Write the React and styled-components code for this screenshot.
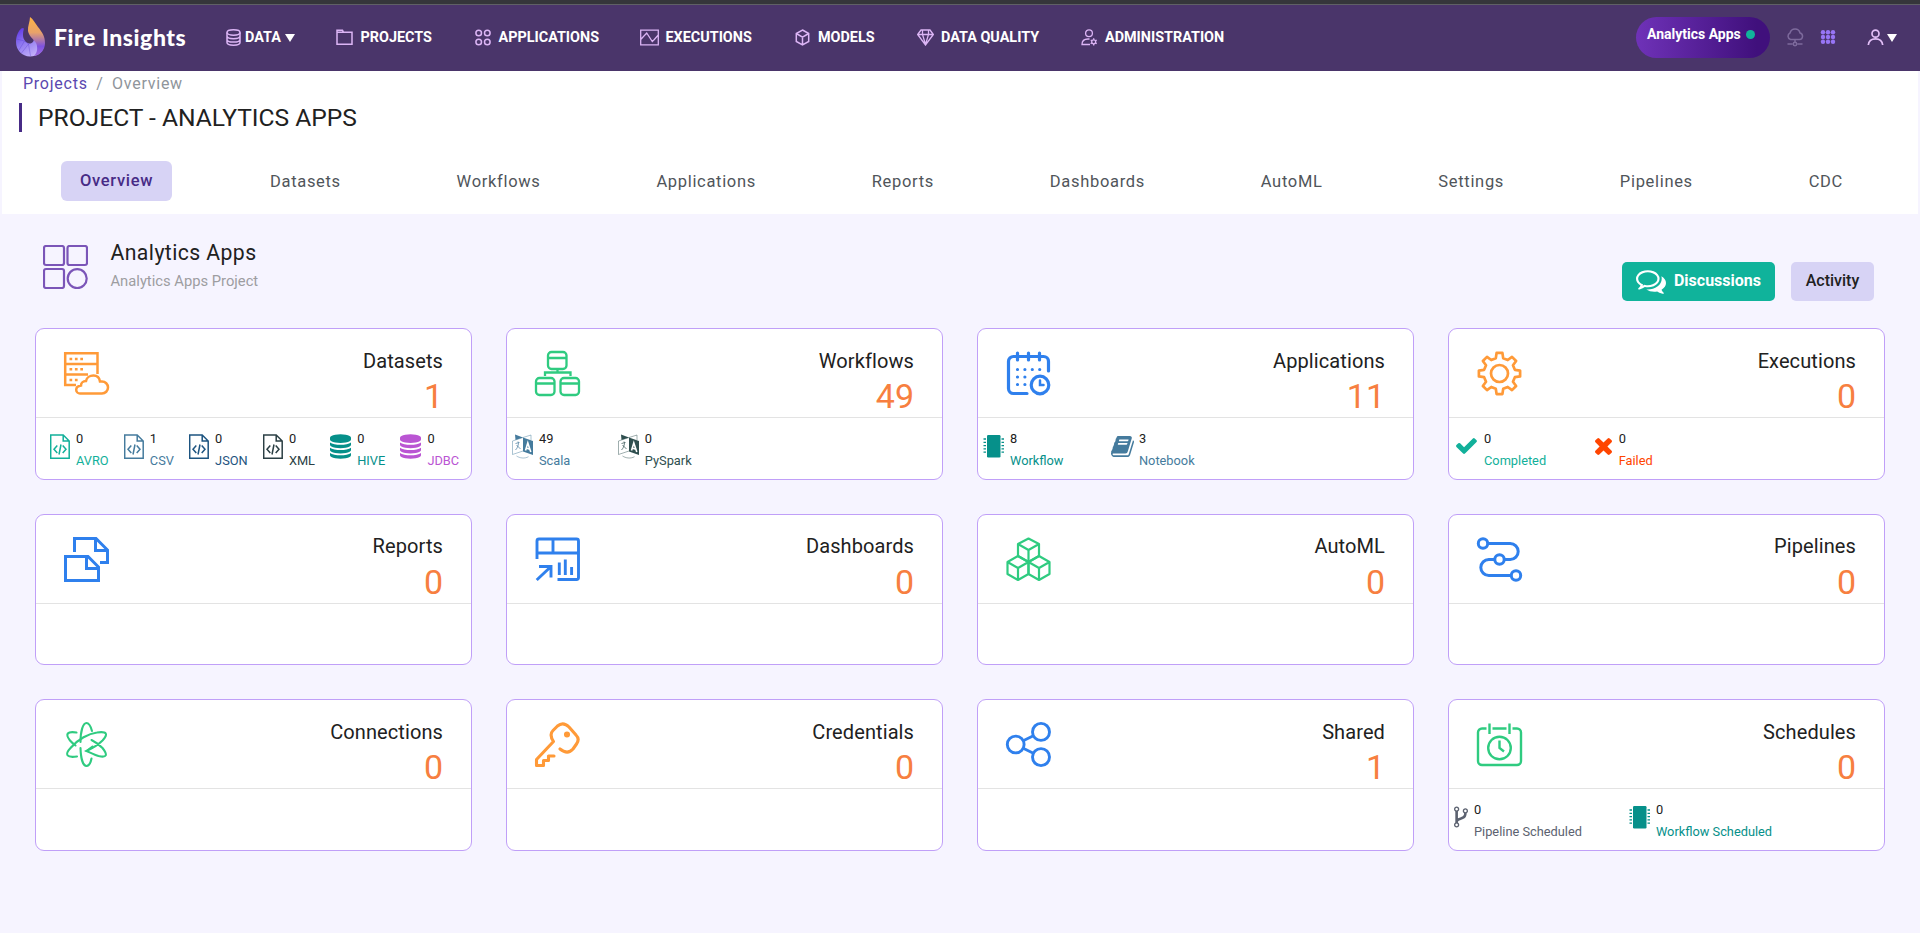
import React from "react";
import styled, { createGlobalStyle } from "styled-components";

const GlobalStyle = createGlobalStyle`
  * { box-sizing: border-box; }
  body {
    margin: 0;
    background: #f6f4ff;
    font-family: Roboto, "Liberation Sans", sans-serif;
    color: #212121;
  }
`;

const Page = styled.div`
  height: 933px;
  display: flex;
  flex-direction: column;
  overflow: hidden;
`;

const TopEdge = styled.div`
  height: 5px;
  background: #35363a;
  border-bottom: 1px solid #5f6065;
`;

const NavBar = styled.nav`
  height: 66px;
  padding: 0 23px 0 15px;
  background: #4a356a;
  display: flex;
  align-items: center;
  color: #fff;
`;

const Brand = styled.div`
  display: flex;
  align-items: center;
  width: 211px;
  gap: 8px;
  padding-bottom: 3px;
`;

const BrandName = styled.span`
  font-family: Lato, sans-serif;
  font-weight: 900;
  font-size: 23px;
  letter-spacing: 0.55px;
  line-height: 30px;
  white-space: nowrap;
`;

const Menu = styled.div`
  display: flex;
  align-items: center;
  flex: 1;
  height: 32px;
  padding-bottom: 2px;
`;

const MenuItem = styled.a`
  display: flex;
  align-items: center;
  width: ${(p) => p.$w}px;
  gap: ${(p) => p.$gap}px;
  font-size: 14.4px;
  font-weight: 700;
  line-height: 20px;
  white-space: nowrap;
  svg { flex: none; color: #dcb5f5; }
  span { padding-top: 2px; }
`;

const Caret = styled.i`
  width: 0;
  height: 0;
  border-left: 5px solid transparent;
  border-right: 5px solid transparent;
  border-top: 8px solid #fff;
  margin-left: ${(p) => p.$ml || 0}px;
  margin-top: 2px;
`;

const NavRight = styled.div`
  display: flex;
  align-items: center;
  padding-bottom: 2px;
`;

const ProjectPill = styled.div`
  width: 134px;
  height: 41px;
  border-radius: 21px;
  padding: 0 0 6px 11px;
  display: flex;
  align-items: center;
  gap: 5px;
  background: linear-gradient(90deg, #6f32b8 0%, #40107c 90%);
  font-size: 14px;
  font-weight: 700;
  white-space: nowrap;
`;

const Dot = styled.i`
  width: 9px;
  height: 9px;
  border-radius: 50%;
  background: #11b39b;
`;

const NavIcons = styled.div`
  display: flex;
  align-items: center;
  padding-left: 16px;
`;

const PageHead = styled.header`
  height: 143px;
  margin: 0 2px;
  background: #fff;
  padding-top: 1px;
`;

const Crumbs = styled.div`
  padding-left: 21px;
  height: 24px;
  line-height: 24px;
  font-size: 16px;
  letter-spacing: 0.75px;
  color: #8f959b;
  display: flex;
  gap: 8.5px;
  a { color: #5a48b0; }
`;

const Title = styled.h1`
  margin: 7px 0 0 17px;
  height: 29px;
  padding-left: 16px;
  border-left: 3px solid #472b86;
  font-size: 24.6px;
  font-weight: 400;
  line-height: 29px;
`;

const Tabs = styled.div`
  margin-top: 29px;
  padding: 0 57px 0 59px;
  display: flex;
  justify-content: space-between;
`;

const Tab = styled.a`
  height: 40px;
  padding: 0 ${(p) => (p.$active ? 19 : 18)}px;
  border-radius: 6px;
  font-size: 16.5px;
  letter-spacing: 0.68px;
  line-height: ${(p) => (p.$active ? 39 : 41)}px;
  font-weight: ${(p) => (p.$active ? 500 : 400)};
  color: ${(p) => (p.$active ? "#472b86" : "#50555a")};
  background: ${(p) => (p.$active ? "#d7d3f5" : "transparent")};
`;

const ProjectRow = styled.section`
  height: 114px;
  padding: 23px 46px 0 43px;
  display: flex;
  align-items: flex-start;
`;

const ProjectIcon = styled.div`
  padding-top: 8px;
  width: 67.5px;
`;

const ProjectText = styled.div`
  flex: 1;
  padding-top: 1px;
`;

const ProjectName = styled.div`
  font-size: 21.2px;
  letter-spacing: 0.42px;
  line-height: 30px;
`;

const ProjectDesc = styled.div`
  margin-top: 3px;
  font-size: 14.75px;
  line-height: 20px;
  color: #9d9da1;
`;

const Button = styled.button`
  margin-top: 25px;
  height: 39px;
  width: ${(p) => p.$w}px;
  margin-left: ${(p) => p.$ml || 0}px;
  border: 0;
  border-radius: 5px;
  padding: 0 0 2px;
  display: flex;
  align-items: center;
  justify-content: center;
  gap: 8px;
  font-family: inherit;
  font-size: 16px;
  font-weight: ${(p) => (p.$primary ? 700 : 500)};
  background: ${(p) => (p.$primary ? "#10b39b" : "#d7d3f5")};
  color: ${(p) => (p.$primary ? "#fff" : "#212121")};
  svg { margin-top: 3px; }
`;

const Grid = styled.main`
  padding: 0 35px;
  display: grid;
  grid-template-columns: repeat(4, 437px);
  grid-auto-rows: 151.5px;
  gap: 34px;
`;

const Card = styled.article`
  background: #fff;
  border: 1px solid #c09ff8;
  border-radius: 9px;
  display: flex;
  flex-direction: column;
`;

const CardTop = styled.div`
  height: 89px;
  border-bottom: 1px solid #e3e3e3;
  padding: 0 28px;
  display: flex;
  justify-content: space-between;
`;

const CardIcon = styled.svg`
  width: 45px;
  height: 45px;
  margin-top: 22px;
  fill: none;
  overflow: visible;
  stroke: currentColor;
  color: ${(p) => p.$color};
`;

const CardText = styled.div`
  text-align: right;
  padding-top: 17.9px;
`;

const CardTitle = styled.div`
  font-size: 20px;
  letter-spacing: 0.1px;
  line-height: 28px;
`;

const CardCount = styled.div`
  font-size: 34px;
  line-height: 40px;
  margin-top: 1.2px;
  color: #f77f40;
`;

const CardBottom = styled.div`
  flex: 1;
  display: flex;
  align-items: flex-start;
  padding: 12px 0 0 ${(p) => p.$pl}px;
  gap: ${(p) => p.$gap}px;
`;

const Stat = styled.div`
  display: flex;
  gap: ${(p) => p.$gap}px;
  color: ${(p) => p.$color};
  svg { flex: none; margin-top: ${(p) => p.$top}px; }
`;

const StatText = styled.div`
  font-size: 12.8px;
  line-height: 18px;
  white-space: nowrap;
`;

const StatValue = styled.div`
  color: #212121;
`;

const StatLabel = styled.div`
  margin-top: 4px;
`;

function Svg({ w, h, vb, sw = 1.5, fill = "none", stroke = "currentColor", children, color }) {
  return (
    <svg width={w} height={h} viewBox={vb || `0 0 ${w} ${h}`} fill={fill} stroke={stroke} strokeWidth={sw} color={color}>
      {children}
    </svg>
  );
}

const Solid = ({ w, h, vb = "0 0 1792 1792", d }) => (
  <svg width={w} height={h} viewBox={vb} fill="currentColor"><path d={d} /></svg>
);

const Flame = () => (
  <svg width="31" height="40" viewBox="0 0 31 40">
    <defs>
      <linearGradient id="fo" x1="0" y1="0" x2="0" y2="1">
        <stop offset="0" stopColor="#ffb444" />
        <stop offset=".4" stopColor="#e8a26a" />
        <stop offset=".75" stopColor="#7d52e0" />
        <stop offset="1" stopColor="#a06be0" />
      </linearGradient>
      <linearGradient id="fp" x1="0" y1="0" x2="0.6" y2="1">
        <stop offset="0" stopColor="#5a2fe6" />
        <stop offset=".5" stopColor="#8f78f0" />
        <stop offset="1" stopColor="#c3b0fa" />
      </linearGradient>
    </defs>
    <path d="M7 11C3 14 1 19 1 25c0 8 6 14.500 14 14.500 7 0 13-4 14-11l-10-7c0 3-2 5-4.500 5C10.500 26 8 22 8 18c0-3 .5-5 1-6.500z" fill="url(#fp)" />
    <path d="M1.500 22l8 2 4 3-7 9M9.500 24L4 33M13.500 27l2 12" stroke="#5b3fd0" strokeOpacity=".45" strokeWidth=".8" fill="none" />
    <path d="M15 0c3 2 5 6 8 10 4 5 7 9 7 16 0 6-4 12-11 13 3-3 4-7 2.500-12-1.500-4-7.500-7-8.500-13C12.500 9 15 5 15 0z" fill="url(#fo)" />
  </svg>
);

const NavIcon = {
  data: (
    <Svg w={15} h={17}>
      <ellipse cx="7.500" cy="3.500" rx="6.500" ry="2.700" />
      <path d="M1 3.500v10c0 1.500 3 2.700 6.500 2.700s6.500-1.200 6.500-2.700v-10M1 7c0 1.500 3 2.700 6.500 2.700S14 8.500 14 7M1 10.400c0 1.500 3 2.700 6.500 2.700s6.500-1.200 6.500-2.700" />
    </Svg>
  ),
  projects: <Svg w={17} h={17}><path d="M1 15.200V1.300h5.500l1 2H16v11.900zM1 3.300h7" /></Svg>,
  apps: (
    <Svg w={16} h={17}>
      <circle cx="3.700" cy="4" r="2.800" /><circle cx="12.300" cy="4" r="2.800" />
      <circle cx="3.700" cy="13" r="2.800" /><circle cx="12.300" cy="13" r="2.800" />
    </Svg>
  ),
  exec: <Svg w={19} h={17} sw={1.300}><path d="M.7 1.200h17.600v14.600H.7zM.7 10.500l6-6.500 5.600 8.500 2-2 4-4.500" /></Svg>,
  models: <Svg w={15} h={17}><path d="M7.500 1l6.200 3.500v8L7.500 16l-6.200-3.500v-8zM1.300 4.500l6.200 3.700 6.200-3.700M7.500 8.200V16" /></Svg>,
  quality: <Svg w={17} h={17} sw={1.300}><path d="M4 1h9l3.300 4.500L8.500 16 .7 5.500zM.7 5.500h15.600M5.500 1v4.500l3 10 3-10V1" /></Svg>,
  admin: (
    <Svg w={17} h={17} sw={1.300}>
      <circle cx="8" cy="4.200" r="3.400" />
      <path d="M9 15.500H1c0-4 2-5.500 6-5.500h1.500" />
      <circle cx="12.700" cy="12.800" r="2" /><path d="M12.700 9.300v1.400M12.700 15v1.500M9.700 11l1.300.8M15.700 11l-1.300.8M9.700 14.700l1.300-.9M15.700 14.700l-1.300-.9" />
    </Svg>
  ),
};

const gearPath = (() => {
  const pts = [];
  const c = 22.5;
  for (let i = 0; i < 8; i++) {
    const base = (i * Math.PI) / 4;
    [[-0.235, 15.8], [-0.14, 20.8], [0.14, 20.8], [0.235, 15.8]].forEach(([a, r]) => {
      pts.push(`${(c + r * Math.sin(base + a)).toFixed(2)} ${(c - r * Math.cos(base + a)).toFixed(2)}`);
    });
  }
  return `M${pts.join("L")}Z`;
})();

const G = "#2fcb80";
const B = "#2f80ed";
const O = "#ff9a38";

const icons = {
  Datasets: (
    <CardIcon $color={O} viewBox="0 0 45 45" strokeWidth="2.500">
      <path d="M12 34H1.200V2.300h32.300V23M1 13h32.500M1 23.500h23" />
      <path d="M5.500 8h14M5.500 18.200h14M5.500 29h9" strokeDasharray="2.700 2.700" />
      <path d="M16 42.500h22a5.700 5.700 0 0 0 0-12h-2C35.500 27 33 24.500 29.500 24.500s-7 2-7.500 5.500c-3 0-5 2-5 4.500-3 .5-4.800 2-4.800 4.200s1.800 3.800 3.800 3.800z" />
    </CardIcon>
  ),
  Workflows: (
    <CardIcon $color={G} viewBox="0 0 45 45" strokeWidth="2.300">
      <rect x="13" y="1" width="18.500" height="17" rx="3.500" />
      <rect x="1" y="27" width="18.500" height="17" rx="3.500" />
      <rect x="25.500" y="27" width="18.500" height="17" rx="3.500" />
      <path d="M13 7h18.500M1 32.500h18.500M25.500 32.500H44M22.500 18v3.500M10 25v-3.500h25.500V25" />
    </CardIcon>
  ),
  Applications: (
    <CardIcon $color={B} viewBox="0 0 45 45" strokeWidth="3.200" strokeLinecap="round">
      <path d="M21 42.500H7.500a5 5 0 0 1-5-5v-27a5 5 0 0 1 5-5h30a5 5 0 0 1 5 5v9.500" />
      <path d="M11.500 2v7M22.500 2v7M33.500 2v7" />
      <circle cx="34" cy="34" r="8.800" />
      <path d="M34 29.500V34h3.500" strokeWidth="2.500" />
      <path d="M11.500 18.500h24M11.500 26h8M11.500 33.500h8" strokeDasharray="0 7.400" />
    </CardIcon>
  ),
  Executions: (
    <CardIcon $color={O} viewBox="0 0 45 45" strokeWidth="2.700" strokeLinejoin="round">
      <path d={gearPath} />
      <circle cx="22.500" cy="22.500" r="8.500" />
    </CardIcon>
  ),
  Reports: (
    <CardIcon $color={B} viewBox="0 0 45 45" strokeWidth="3">
      <path d="M1.500 19.500H24l10.500 10.500v13.500h-33zM22.500 19v12.500H35" />
      <path d="M10.500 15V1.500H32L43.500 13v12.500H36M31.500 1v12.500H44" />
    </CardIcon>
  ),
  Dashboards: (
    <CardIcon $color={B} viewBox="0 0 45 45" strokeWidth="2.900">
      <path d="M2 22V4a2 2 0 0 1 2-2h37.500a2 2 0 0 1 2 2v36.500a2 2 0 0 1-2 2H22.500M2 16h41.500M18 2v14" />
      <path d="M1.700 43L16 29.500M4 29.500h12v11M24.300 25.500v12.500M30.300 22.500V38M36.600 30v8" />
    </CardIcon>
  ),
  AutoML: (
    <CardIcon $color={G} viewBox="0 0 45 45" strokeWidth="2.200" strokeLinejoin="round">
      <path d="M22.500 1.500L33 7v12l-10.500 6L12 19V7zM12 7l10.500 6L33 7M22.500 13v12" />
      <path d="M12 19l10.500 6v12L12 43 1.500 37V25zM1.500 25L12 31l10.500-6M12 31v12" />
      <path d="M33 19l10.500 6v12L33 43l-10.500-6V25zM22.500 25L33 31l10.500-6M33 31v12" />
    </CardIcon>
  ),
  Pipelines: (
    <CardIcon $color={B} viewBox="0 0 45 45" strokeWidth="3">
      <circle cx="6" cy="6.500" r="4.700" /><circle cx="22.500" cy="22.500" r="4.700" /><circle cx="39" cy="38.500" r="4.700" />
      <path d="M10.700 6.500h22.500a8 8 0 0 1 0 16h-6M17.800 22.500h-6a8 8 0 0 0 0 16h22.500" />
    </CardIcon>
  ),
  Connections: (
    <CardIcon $color={G} viewBox="0 0 45 45" strokeWidth="2.100" strokeLinecap="round">
      <path d="M28 9C26.500 3.500 25 1 22.500 1 19 1 16.500 9 16.500 20M16.500 26c.3 11 2.800 18 6 18 2.500 0 4-2.500 5-7.500" />
      <path d="M13 34.500C3 36 0 33 6.500 26 14 17 25 11.500 33 10.500c10-1.500 11.500 1.500 5.500 8C34 23 29 26 22.500 29c4.500 2 8.500 4 12 5 8.500 2 9.500-1 4-8-3.500-3.500-7-6-11-8" />
      <path d="M12.500 10.500C3 9 1 12 6 18.500c2 2.300 3.500 3.500 5.500 5M22.500 29l6-4.500" />
    </CardIcon>
  ),
  Credentials: (
    <CardIcon $color={O} viewBox="0 0 45 45" strokeWidth="3.100" strokeLinecap="round" strokeLinejoin="round">
      <path d="M25 27c5 4 9.500 4 13 0l3.500-5c2.500-3.500 2-6.500-.5-9l-7-8C30 1 26 1 22.500 4l-4.500 4.500c-3 3-2.500 6.500.5 11L1.500 37.500v6h7v-5h5v-4.500h5.500" />
      <circle cx="32" cy="12.500" r="1.500" fill="currentColor" />
    </CardIcon>
  ),
  Shared: (
    <CardIcon $color={B} viewBox="0 0 45 45" strokeWidth="2.900">
      <circle cx="9.700" cy="22.500" r="8.400" /><circle cx="35" cy="9.900" r="8.500" /><circle cx="35" cy="35.100" r="8.500" />
      <path d="M17.200 18.700l10.200-5M17.200 26.300l10.200 5" />
    </CardIcon>
  ),
  Schedules: (
    <CardIcon $color={G} viewBox="0 0 45 45" strokeWidth="2.400">
      <path d="M9.500 6.500H5a4 4 0 0 0-4 4V39a4 4 0 0 0 4 4h35a4 4 0 0 0 4-4V10.500a4 4 0 0 0-4-4h-4.500M15.500 6.500h14M12.500 1.500v10.500M32.500 1.500v10.500" />
      <circle cx="22.500" cy="26" r="11.300" /><path d="M22.500 18.500V26l4.500 3.500" />
    </CardIcon>
  ),
};

const CodeFile = (
  <Svg w={20} h={25} sw={1.500}>
    <path d="M.7 1h12.500l6 6v17.200H.7zM13.200 1v6h6M7.300 11.500L4 15.300l3.300 3.700M12.700 11.500l3.300 3.800-3.300 3.700M11 10.500L9 20.500" />
  </Svg>
);
const Database = (
  <Solid w={21} h={25} vb="128 0 1536 1792" d="M896 768q237 0 443-43t325-127v170q0 69-103 128t-280 93.500-385 34.500-385-34.500-280-93.500-103-128v-170q119 84 325 127t443 43zm0 768q237 0 443-43t325-127v170q0 69-103 128t-280 93.500-385 34.500-385-34.500-280-93.500-103-128v-170q119 84 325 127t443 43zm0-384q237 0 443-43t325-127v170q0 69-103 128t-280 93.500-385 34.500-385-34.500-280-93.500-103-128v-170q119 84 325 127t443 43zm0-1152q208 0 385 34.500t280 93.500 103 128v128q0 69-103 128t-280 93.500-385 34.500-385-34.500-280-93.500-103-128v-128q0-69 103-128t280-93.500 385-34.500z" />
);
const Language = (
  <svg width="21" height="25" viewBox="0 0 21 25" fill="none" stroke="currentColor">
    <path d="M3 .5l8 3-7.500 2.500zM11 3.500l10 3.500v14l-10-3.500z" fill="currentColor" stroke="none" />
    <path d="M11 3.500L.5 7v13.500l10.500-3.500M11 3.500l8-2.500v5M4.500 22c3 2 8 3 12 .7" strokeWidth=".7" strokeOpacity=".65" />
    <path d="M3.500 9.500l4-1M6 7.500l.5 2c-.5 3-1.500 5-3 6.500M4.500 11l4 4" strokeWidth=".9" strokeOpacity=".8" />
    <path d="M13.500 16.500l2.300-7.500 3 9M14.200 14l3.700 1.200" stroke="#fff" strokeWidth="1.600" />
  </svg>
);
const Chip = (
  <svg width="21" height="25" viewBox="0 0 21 25" fill="currentColor">
    <rect x="4" y="1" width="13.500" height="22.500" rx="1.200" />
    <path d="M.5 5h2.500M.5 8.300h2.500M.5 11.600h2.500M.5 14.900h2.500M.5 18.200h2.500M18.500 5h2.500M18.500 8.300h2.500M18.500 11.600h2.500M18.500 14.900h2.500M18.500 18.200h2.500" stroke="currentColor" strokeWidth="1.300" />
  </svg>
);
const Book = (
  <Solid w={23} h={25} vb="64 0 1664 1792" d="M1703 478q40 57 18 129l-275 906q-19 64-76.500 107.500t-122.500 43.500h-923q-77 0-148.500-53.500t-99.500-131.500q-24-67-2-127 0-4 3-27t4-37q1-8-3-21.500t-3-19.500q2-11 8-21t16.500-23.500 16.500-23.500q23-38 45-91.500t30-91.500q3-10 .5-30t-.5-28q3-11 17-28t17-23q21-36 42-92t25-90q1-9-2.500-32t.5-28q4-13 22-30.500t22-22.500q19-26 42.500-84.500t27.500-96.500q1-8-3-25.500t-2-26.500q2-8 9-18t18-23 17-21q8-12 16.500-30.500t15-35 16-36 19.500-32 26.500-23.500 36-11.500 47.500 5.500l-1 3q38-9 51-9h761q74 0 114 56t18 130l-274 906q-36 119-71.500 153.500t-128.500 34.500h-869q-27 0-38 15-11 16-1 43 24 70 144 70h923q29 0 56-15.500t35-41.500l300-987q7-22 5-57 38 15 59 43zm-1064 2q-4 13 2 22.500t20 9.500h608q13 0 25.500-9.500t16.500-22.500l21-64q4-13-2-22.500t-20-9.500h-608q-13 0-25.500 9.500t-16.500 22.500zm-83 256q-4 13 2 22.500t20 9.500h608q13 0 25.500-9.500t16.500-22.500l21-64q4-13-2-22.500t-20-9.500h-608q-13 0-25.500 9.500t-16.500 22.500z" />
);
const Check = (
  <Solid w={21} h={16} vb="121 334 1550 1188" d="M1671 566q0 40-28 68l-724 724-136 136q-28 28-68 28t-68-28l-136-136-362-362q-28-28-28-68t28-68l136-136q28-28 68-28t68 28l294 295 656-657q28-28 68-28t68 28l136 136q28 28 28 68z" />
);
const Cross = (
  <Solid w={17} h={17} vb="302 366 1188 1188" d="M1490 1322q0 40-28 68l-136 136q-28 28-68 28t-68-28l-294-294-294 294q-28 28-68 28t-68-28l-136-136q-28-28-28-68t28-68l294-294-294-294q-28-28-28-68t28-68l136-136q28-28 68-28t68 28l294 294 294-294q28-28 68-28t68 28l136 136q28 28 28 68t-28 68l-294 294 294 294q28 28 28 68z" />
);
const Fork = (
  <Solid w={14} h={22} vb="384 128 1024 1536" d="M672 1472q0-40-28-68t-68-28-68 28-28 68 28 68 68 28 68-28 28-68zm0-1152q0-40-28-68t-68-28-68 28-28 68 28 68 68 28 68-28 28-68zm640 128q0-40-28-68t-68-28-68 28-28 68 28 68 68 28 68-28 28-68zm96 0q0 52-26 96.500t-70 69.500q-2 287-226 414-67 38-203 81-128 40-169.500 71t-41.500 100v26q44 25 70 69.500t26 96.500q0 80-56 136t-136 56-136-56-56-136q0-52 26-96.500t70-69.500v-820q-44-25-70-69.500t-26-96.500q0-80 56-136t136-56 136 56 56 136q0 52-26 96.500t-70 69.500v497q54-26 154-57 55-17 87.500-29.500t70.500-31 59-39.500 40.500-51 28-69.500 8.500-91.500q-44-25-70-69.500t-26-96.500q0-80 56-136t136-56 136 56 56 136z" />
);
const Comments = (
  <Solid w={30} h={24} vb="0 256 1792 1408" d="M704 384q-153 0-286 52t-211.500 141-78.500 191q0 82 53 158t149 132l97 56-35 84q34-20 62-39l44-31 53 10q78 14 153 14 153 0 286-52t211.500-141 78.500-191-78.500-191-211.500-141-286-52zm0-128q191 0 353.500 68.500t256.500 186.500 94 257-94 257-256.500 186.500-353.500 68.500q-86 0-176-16-124 88-278 128-36 9-86 16h-3q-11 0-20.500-8t-11.500-21q-1-3-1-6.500t.5-6.500 2-6l2.500-5 3.500-5.500 4-5 4.500-5 4-4.500q5-6 23-25t26-29.500 22.500-29 25-38.500 20.500-44q-124-72-195-177t-71-224q0-139 94-257t256.500-186.500 353.500-68.500zm822 1169q10 24 20.500 44t25 38.500 22.500 29 26 29.500 23 25q1 1 4 4.500t4.500 5 4 5 3.500 5.500l2.500 5 2 6 .5 6.500-1 6.500q-3 14-13 22t-22 7q-50-7-86-16-154-40-278-128-90 16-176 16-271 0-472-132 58 4 88 4 161 0 309-45t264-129q125-92 192-212t67-254q0-77-23-152 129 71 204 178t75 230q0 120-71 224.500t-195 176.500z" />
);

const menu = [
  ["DATA", "data", 110, 4],
  ["PROJECTS", "projects", 139, 7.5],
  ["APPLICATIONS", "apps", 165, 7.5],
  ["EXECUTIONS", "exec", 155, 6.5],
  ["MODELS", "models", 122, 8],
  ["DATA QUALITY", "quality", 164, 7],
  ["ADMINISTRATION", "admin", 160, 7],
];

const tabs = ["Overview", "Datasets", "Workflows", "Applications", "Reports", "Dashboards", "AutoML", "Settings", "Pipelines", "CDC"];

const cards = [
  {
    name: "Datasets", count: 1, pl: 14, gap: 15.2,
    stats: [
      ["AVRO", 0, "#12b09a", CodeFile], ["CSV", 1, "#457b9d", CodeFile], ["JSON", 0, "#1d5480", CodeFile],
      ["XML", 0, "#2b3f44", CodeFile], ["HIVE", 0, "#06908a", Database], ["JDBC", 0, "#ba55d3", Database],
    ],
  },
  { name: "Workflows", count: 49, pl: 5, gap: 47.5, stats: [["Scala", 49, "#457b9d", Language], ["PySpark", 0, "#2f4f4f", Language]] },
  { name: "Applications", count: 11, pl: 5, gap: 47.5, stats: [["Workflow", 8, "#06908a", Chip], ["Notebook", 3, "#457b9d", Book, 5, 4]] },
  { name: "Executions", count: 0, pl: 7, gap: 48.5, stats: [["Completed", 0, "#12b09a", Check, 7, 8], ["Failed", 0, "#ff4500", Cross, 7, 8]] },
  { name: "Reports", count: 0 },
  { name: "Dashboards", count: 0 },
  { name: "AutoML", count: 0 },
  { name: "Pipelines", count: 0 },
  { name: "Connections", count: 0 },
  { name: "Credentials", count: 0 },
  { name: "Shared", count: 1 },
  { name: "Schedules", count: 0, pl: 5, gap: 47, stats: [["Pipeline Scheduled", 0, "#5c6270", Fork, 6, 5], ["Workflow Scheduled", 0, "#06908a", Chip]] },
];

export default function App() {
  return (
    <Page>
      <GlobalStyle />
      <TopEdge />
      <NavBar>
        <Brand>
          <Flame />
          <BrandName>Fire Insights</BrandName>
        </Brand>
        <Menu>
          {menu.map(([label, icon, w, gap]) => (
            <MenuItem key={label} $w={w} $gap={gap}>
              {NavIcon[icon]}
              <span>{label}</span>
              {icon === "data" && <Caret />}
            </MenuItem>
          ))}
        </Menu>
        <NavRight>
          <ProjectPill>
            Analytics Apps
            <Dot />
          </ProjectPill>
          <NavIcons>
            <Svg w={18} h={19} color="#7d6a9c">
              <path d="M4.500 11.500A3.500 3.500 0 0 1 4 5c.7-2.500 2.500-4 5-4s4.500 1.500 5 4a3.300 3.300 0 0 1-.5 6.500zM9 11.500v3M1.500 16h5.200M11.300 16h5.200" />
              <circle cx="9" cy="16" r="1.700" />
            </Svg>
            <svg width="63" height="15" viewBox="-17 0 63 15" fill="#9775f5">
              {[2.2, 7, 11.8].map((y) => [2, 7, 12].map((x) => <circle key={`${x}-${y}`} cx={x} cy={y} r="2.200" />))}
            </svg>
            <Svg w={17} h={17} color="#e2bff7" sw={1.700}>
              <circle cx="8.500" cy="4.700" r="3.500" />
              <path d="M1.300 16c.5-4.300 3.200-6.200 7.200-6.200s6.700 1.900 7.200 6.200" />
            </Svg>
            <Caret $ml={3} />
          </NavIcons>
        </NavRight>
      </NavBar>
      <PageHead>
        <Crumbs><a>Projects</a><span>/</span><span>Overview</span></Crumbs>
        <Title>PROJECT - ANALYTICS APPS</Title>
        <Tabs>
          {tabs.map((t, i) => <Tab key={t} $active={i === 0}>{t}</Tab>)}
        </Tabs>
      </PageHead>
      <ProjectRow>
        <ProjectIcon>
          <Svg w={45} h={44} sw={2.2} color="#7b55b8">
            <rect x="1" y="1" width="20" height="19" rx="2" />
            <rect x="24.500" y="1" width="19.500" height="19" rx="2" />
            <rect x="1" y="24" width="20" height="19" rx="2" />
            <circle cx="34.200" cy="33.600" r="9.500" />
          </Svg>
        </ProjectIcon>
        <ProjectText>
          <ProjectName>Analytics Apps</ProjectName>
          <ProjectDesc>Analytics Apps Project</ProjectDesc>
        </ProjectText>
        <Button $primary $w={153}>{Comments}Discussions</Button>
        <Button $w={83} $ml={16}>Activity</Button>
      </ProjectRow>
      <Grid>
        {cards.map((c) => (
          <Card key={c.name}>
            <CardTop>
              {icons[c.name]}
              <CardText>
                <CardTitle>{c.name}</CardTitle>
                <CardCount>{c.count}</CardCount>
              </CardText>
            </CardTop>
            {c.stats && (
              <CardBottom $pl={c.pl} $gap={c.gap}>
                {c.stats.map(([label, value, color, icon, gap = 6, top = 4]) => (
                  <Stat key={label} $color={color} $gap={gap} $top={top}>
                    {icon}
                    <StatText>
                      <StatValue>{value}</StatValue>
                      <StatLabel>{label}</StatLabel>
                    </StatText>
                  </Stat>
                ))}
              </CardBottom>
            )}
          </Card>
        ))}
      </Grid>
    </Page>
  );
}
